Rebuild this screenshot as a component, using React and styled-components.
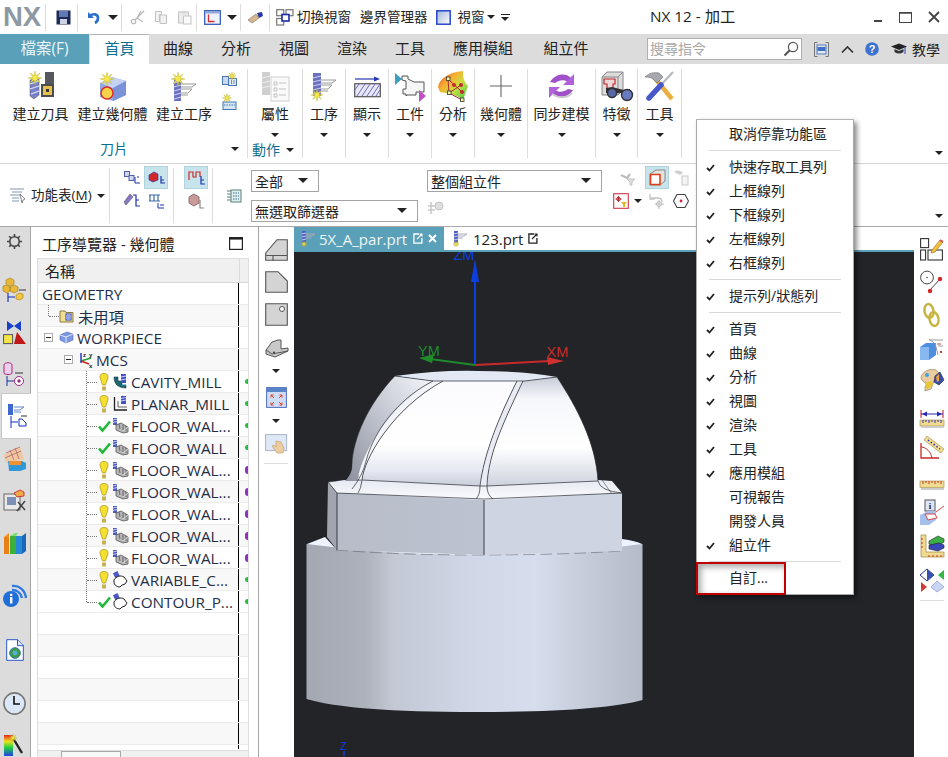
import React from "react";
import styled, { createGlobalStyle } from "styled-components";

const FONT = `"Open Sans", "Noto Sans CJK TC", sans-serif`;
const TEAL = "#5aa0b8";

const GlobalStyle = createGlobalStyle`
  html, body { margin: 0; padding: 0; background: #fff; }
  body { font-family: ${FONT}; color: #222; }
  * { box-sizing: border-box; }
`;

const Glyph = styled.svg`
  display: block;
  flex-shrink: 0;
  overflow: ${(p) => (p.$clip ? "hidden" : "visible")};
`;

const Ic = ({ w, h = w, children }) => (
  <Glyph width={w} height={h} viewBox={`0 0 ${w} ${h}`}>
    {children}
  </Glyph>
);

// yellow burst used on the "create" icons
const Spark = ({ x, y, r = 7 }) => {
  const pts = [];
  for (let i = 0; i < 16; i++) {
    const a = (i * Math.PI) / 8;
    const d = i % 2 ? r * 0.35 : r;
    pts.push(`${x + Math.cos(a) * d},${y + Math.sin(a) * d}`);
  }
  return <polygon points={pts.join(" ")} fill="#f4e84a" stroke="#b9a92a" strokeWidth=".4" />;
};

const Cutter = ({ x = 0, y = 0, w = 8, h = 24 }) => (
  <g>
    <rect x={x} y={y} width={w} height={h} fill="#6a72c0" />
    {[3, 7, 11, 15, 19].map((d) => (
      <path key={d} d={`M${x} ${y + d + 2}L${x + w} ${y + d}`} stroke="#c8ccec" strokeWidth="1.2" />
    ))}
  </g>
);

const OpLines = ({ x, y }) => (
  <g fill="none" stroke="#9a9a9a" strokeWidth="1">
    <path d={`M${x} ${y}H${x + 15}L${x + 11} ${y + 3}H${x}`} />
    <path d={`M${x} ${y + 5}H${x + 11}L${x + 7} ${y + 9}H${x}`} />
    <path d={`M${x} ${y + 11}H${x + 7}`} />
  </g>
);

const Icons = {
  save: () => (
    <Ic w={15}>
      <rect x=".5" y=".5" width="14" height="14" fill="#1d2a58" />
      <rect x="3" y="1" width="9" height="6" fill="#5f79b4" />
      <rect x="4" y="9" width="7" height="5" fill="#ccd4e4" />
    </Ic>
  ),
  undo: () => (
    <Ic w={16}>
      <path d="M3 3v6h6" fill="#2a6fd0" />
      <path d="M5 7c3-3 8-2 8 2 0 2-1 4-3 5" fill="none" stroke="#2a6fd0" strokeWidth="2.6" />
    </Ic>
  ),
  scissors: () => (
    <Ic w={15}>
      <path d="M14 1L5 10M11 1L7 8L13 12" stroke="#bdbdbd" strokeWidth="1.4" fill="none" />
      <circle cx="3.5" cy="11.5" r="2.2" fill="none" stroke="#bdbdbd" strokeWidth="1.3" />
    </Ic>
  ),
  copy: () => (
    <Ic w={14}>
      <path d="M1.5 1.5h6v3h-2v7h-4zM6 5h6.5v8.5H6z" fill="#f2f2f2" stroke="#c2c2c2" />
    </Ic>
  ),
  paste: () => (
    <Ic w={15}>
      <rect x="1.5" y="2" width="10" height="11" fill="#ececec" stroke="#c4c4c4" />
      <rect x="4" y="1" width="5" height="2.5" fill="#d4d4d4" />
      <rect x="6.5" y="6" width="7.5" height="8" fill="#fafafa" stroke="#c4c4c4" />
    </Ic>
  ),
  view: () => (
    <Ic w={17} h={15}>
      <rect x=".7" y=".7" width="15.6" height="13.6" fill="#eef2fa" stroke="#2a50b8" strokeWidth="1.2" />
      <rect x="1" y="1" width="15" height="2.5" fill="#90a8d8" />
      <path d="M4.5 4.5v7h6" fill="none" stroke="#d03030" strokeWidth="1.3" />
    </Ic>
  ),
  brush: () => (
    <Ic w={17} h={13}>
      <path d="M1 9l8-6 3 4-7 5z" fill="#d8b890" stroke="#7a6a50" strokeWidth=".6" />
      <path d="M10 2l5-1 1 4-4 2z" fill="#2838a8" />
    </Ic>
  ),
  switchWin: () => (
    <Ic w={18} h={17}>
      <g fill="#fff" stroke="#777" strokeWidth="1.2">
        <rect x=".7" y=".7" width="7" height="6" />
        <rect x="10" y=".7" width="7" height="6" />
        <rect x=".7" y="9.5" width="7" height="6.5" />
      </g>
      <rect x="6" y="5.5" width="7" height="6.5" fill="#fff" stroke="#1a2aa8" strokeWidth="1.6" />
    </Ic>
  ),
  winBlue: () => (
    <Ic w={15}>
      <defs>
        <linearGradient id="wb" x1="0" y1="0" x2="1" y2="1">
          <stop offset="0" stopColor="#9fb6d8" />
          <stop offset="1" stopColor="#ffffff" />
        </linearGradient>
      </defs>
      <rect x=".8" y=".8" width="13.4" height="13.4" fill="url(#wb)" stroke="#1a3ac8" strokeWidth="1.4" />
    </Ic>
  ),
  search: () => (
    <Ic w={16}>
      <circle cx="10" cy="6" r="4.6" fill="#fff" stroke="#555" strokeWidth="1.2" />
      <path d="M6.5 9.5L1.5 14.5" stroke="#555" strokeWidth="2.2" />
    </Ic>
  ),
  ribbonMin: () => (
    <Ic w={15}>
      <path d="M3.5.5H.5v14h3M11.5.5h3v14h-3" fill="none" stroke="#777" />
      <rect x="3" y="3" width="9" height="9" fill="#dfe6f4" stroke="#5878b8" />
      <rect x="3.5" y="5" width="8" height="4" fill="#3d70c0" />
    </Ic>
  ),
  chevUp: () => (
    <Ic w={13} h={9}>
      <path d="M1 7.5L6.5 2 12 7.5" fill="none" stroke="#333" strokeWidth="1.7" />
    </Ic>
  ),
  help: () => (
    <Ic w={14}>
      <circle cx="7" cy="7" r="6.8" fill="#3c72d0" />
      <text x="7" y="11" textAnchor="middle" fontSize="11" fontWeight="700" fill="#fff" fontFamily="Liberation Sans">?</text>
    </Ic>
  ),
  hat: () => (
    <Ic w={16} h={12}>
      <path d="M0 3.5L8 .5 16 3.5 8 7z" fill="#222" />
      <path d="M3.5 6v3c3 2 6 2 9 0V6L8 8z" fill="#333" />
      <path d="M14 4v7" stroke="#2840c0" />
    </Ic>
  ),
  toolCreate: () => (
    <Ic w={30}>
      <rect x="19" y="1" width="9" height="14" fill="#55585c" />
      <rect x="15" y="13" width="13" height="13" fill="#4a4c50" />
      <rect x="17" y="15" width="9" height="9" fill="#e8c050" />
      <rect x="20" y="18" width="3" height="3" fill="#333" />
      <path d="M4 9l9-2v17l-5 4-4-3z" fill="#7880c8" stroke="#555" strokeWidth=".5" />
      <path d="M4 13l9-3M4 18l9-3M5 23l8-3" stroke="#dfe2f4" strokeWidth="1.3" />
      <Spark x={9} y={7} r={7} />
    </Ic>
  ),
  geomCreate: () => (
    <Ic w={31}>
      <path d="M3 12l12-6 14 4v14l-13 6L3 26z" fill="#8ea8e6" />
      <path d="M3 12l13 5 13-7-14-4z" fill="#c6d2f2" />
      <path d="M16 17v13l13-6V10z" fill="#7c92d8" />
      <circle cx="10" cy="22" r="6" fill="#f4d24a" stroke="#e02828" strokeWidth="1.4" />
      <Spark x={10} y={8} r={7} />
    </Ic>
  ),
  opCreate: () => (
    <Ic w={28}>
      <g transform="translate(4 6)"><Cutter w={7} h={23} /></g>
      <OpLines x={11} y={12} />
      <Spark x={8} y={7} r={7} />
    </Ic>
  ),
  smallA: () => (
    <Ic w={15} h={14}>
      <rect x=".5" y="4.5" width="6" height="8" fill="#ccd8f0" stroke="#4878b8" />
      <rect x="6.5" y="6.5" width="8" height="7" fill="#dfe8f6" stroke="#4878b8" />
      <path d="M9 9h1M11.5 9h1M9 11h1M11.5 11h1" stroke="#333" />
      <Spark x={10} y={4} r={4} />
    </Ic>
  ),
  smallB: () => (
    <Ic w={15} h={17}>
      <rect x="1" y="9" width="13" height="7.5" fill="#d6e6f4" stroke="#3d78b0" />
      <path d="M2 12h11" stroke="#3d78b0" strokeDasharray="1.5 1" />
      <Spark x={5} y={5} r={4.5} />
    </Ic>
  ),
  props: () => (
    <Ic w={29} h={31}>
      <rect x="1" y="1" width="8" height="23" fill="#cfcfcf" />
      <path d="M1 7l8-2M1 12l8-2M1 17l8-2" stroke="#eee" />
      <rect x="10" y="6" width="18" height="24" fill="#fafafa" stroke="#d0d0d0" />
      <path d="M13 11h3v3h-3zM13 17h3v3h-3zM13 23h3v3h-3zM18 12h7M18 18h7M18 24h7" fill="none" stroke="#c2c2c2" />
    </Ic>
  ),
  ops: () => (
    <Ic w={28}>
      <g transform="translate(3 1)"><Cutter w={8} h={23} /></g>
      <OpLines x={11} y={8} />
      <Spark x={7} y={23} r={6} />
    </Ic>
  ),
  display: () => (
    <Ic w={27} h={21}>
      <path d="M1 3h21" stroke="#2838b0" strokeWidth="1.2" />
      <path d="M20 .5L26 3l-6 2.5z" fill="#2838b0" />
      <rect x=".7" y="7.7" width="25.6" height="13" fill="#e7e7f6" stroke="#555" strokeWidth="1.2" />
      <path d="M3 20l8-12M8 20l8-12M13 20l8-12M18 20l8-12M0 15l5-7M22 20l4-6" stroke="#6c6cc0" />
    </Ic>
  ),
  workpiece: () => (
    <Ic w={32} h={29}>
      <path d="M1 1l7 6-7 6z" fill="#3d9fc0" />
      <path d="M8 4h6v3l6 3h10v10h-8v3H13l-1 1v-2H9v-5h3V9L8 8z" fill="#f6f6f6" stroke="#555" strokeWidth="1" />
      <path d="M25 18l7 6-7 6z" fill="#c050c8" />
    </Ic>
  ),
  analysis: () => (
    <Ic w={32} h={31}>
      <defs>
        <linearGradient id="an" x1="0" y1="0" x2="1" y2="1">
          <stop offset="0" stopColor="#e8402c" />
          <stop offset=".35" stopColor="#f6b030" />
          <stop offset=".6" stopColor="#c8e040" />
          <stop offset="1" stopColor="#38c850" />
        </linearGradient>
      </defs>
      <path d="M1 16C2 8 12 1 26 0c0 7 1 11 5 15l-5 14C18 23 8 22 3 21z" fill="url(#an)" />
      <path d="M11 8l1 14 13 7 M11 8l14 13 M12 22l12-8" stroke="#a82838" fill="none" />
      <circle cx="24" cy="14" r="2" fill="#c82830" />
      <circle cx="17" cy="14" r="2" fill="#c82830" />
      <circle cx="25" cy="21" r="2" fill="#c82830" />
      <g fill="#f8f4a0" stroke="#333" strokeWidth=".8">
        <rect x="9.5" y="6" width="3.5" height="3.5" />
        <rect x="10.5" y="20" width="3.5" height="3.5" />
        <rect x="23.5" y="27" width="3.5" height="3.5" />
      </g>
    </Ic>
  ),
  cross: () => (
    <Ic w={24}>
      <path d="M12 1v22M1 12h22" stroke="#666" strokeWidth="1.1" />
    </Ic>
  ),
  sync: () => (
    <Ic w={29} h={26}>
      <path d="M3 9C8 1 18-1 24 5l-3 4c-4-3-9-2-13 1z" fill="#a050c8" />
      <path d="M27 1v11h-11z" fill="#b060d8" />
      <path d="M26 17c-5 8-15 10-21 4l3-4c4 3 9 2 13-1z" fill="#a050c8" />
      <path d="M2 25V14h11z" fill="#b060d8" />
      <path d="M5 21c6 4 14 5 20-1" fill="none" stroke="#ccc" strokeWidth="2" />
    </Ic>
  ),
  feature: () => (
    <Ic w={32} h={30}>
      <path d="M1 6l5-5h16v18l-5 5H1z" fill="#dcdcdc" stroke="#888" />
      <path d="M1 6h16v18M17 6l5-5" fill="none" stroke="#888" />
      <path d="M3 8h11v5h-2v8H6v-8H3z" fill="#efd8d8" stroke="#c02828" strokeWidth="1.2" />
      <path d="M5 17l6-1 12 3 6-1v4l-24 0z" fill="#333" />
      <circle cx="11" cy="22" r="4.5" fill="#5868a8" stroke="#333" strokeWidth="1.4" />
      <circle cx="26" cy="24" r="5.5" fill="#6a7ac0" stroke="#333" strokeWidth="1.4" />
    </Ic>
  ),
  tools: () => (
    <Ic w={30}>
      <path d="M9 6L27 28" stroke="#e8b040" strokeWidth="4.5" />
      <path d="M0 6c4-4 9-5 14-4l4 4-6 6-3-3C6 6 3 6 0 6z" fill="#a8a8b0" stroke="#666" strokeWidth=".6" />
      <path d="M28 1L15 15" stroke="#b8b8c0" strokeWidth="2.2" />
      <path d="M16 14L4 27" stroke="#4858c8" strokeWidth="5.5" strokeLinecap="round" />
    </Ic>
  ),
  menuFn: () => (
    <Ic w={17} h={15}>
      <path d="M1 1h14M3 4h10M1 7h11M3 10h7M3 13h7" stroke="#8098b4" strokeWidth="1.2" />
      <path d="M11 6l5 5-2 1-1 3z" fill="#fff" stroke="#666" strokeWidth=".8" />
    </Ic>
  ),
  orderA: () => (
    <Ic w={17} h={14}>
      <rect x=".5" y=".5" width="5" height="5" fill="#d0d8f0" stroke="#5060a8" />
      <rect x="5" y="4.5" width="5" height="5" fill="#d0d8f0" stroke="#5060a8" />
      <path d="M11 6v6h5M13 6h2" fill="none" stroke="#1a30b0" />
    </Ic>
  ),
  orderB: () => (
    <Ic w={17} h={14}>
      <path d="M1 4l5-3 4 2v6l-5 2-4-2z" fill="#d02828" stroke="#3040a8" strokeWidth=".7" />
      <path d="M13 5v7h4M13 9h3" fill="none" stroke="#1a30b0" strokeWidth="1.2" />
    </Ic>
  ),
  orderC: () => (
    <Ic w={18}>
      <path d="M1 10l6-8 3 3-7 8z" fill="#8878c8" stroke="#555" strokeWidth=".6" />
      <path d="M10 3h3v11h4M13 8h3" fill="none" stroke="#1a30b0" strokeWidth="1.2" />
    </Ic>
  ),
  orderD: () => (
    <Ic w={17} h={15}>
      <path d="M1 2h11M1 8h11M2 2v6M6 2v6M10 2v6" stroke="#3c68a8" strokeWidth="1.2" />
      <path d="M10 10v5h6M12 12h4" fill="none" stroke="#1a30b0" />
    </Ic>
  ),
  orderE: () => (
    <Ic w={17} h={15}>
      <path d="M1 10V2h4v5h3V2h4v5" fill="none" stroke="#d02828" strokeWidth="1.2" />
      <path d="M13 6v8h4M13 10h3" fill="none" stroke="#1a30b0" strokeWidth="1.2" />
    </Ic>
  ),
  orderF: () => (
    <Ic w={17} h={16}>
      <path d="M1 4l5-3 5 3v6l-5 3-5-3z" fill="#c89a9a" stroke="#907070" />
      <path d="M12 7v8h4" fill="none" stroke="#888" strokeWidth="1.2" />
    </Ic>
  ),
  drum: () => (
    <Ic w={16}>
      <path d="M1 3h10M1 6h10M1 9h10M1 12h10" stroke="#5c7e7e" />
      <rect x="5" y="2" width="10" height="12" fill="#e0eef0" stroke="#5c7e7e" />
      <path d="M7 5h6M7 8h6M7 11h6" stroke="#3a6a8a" strokeDasharray="1.5 1" />
    </Ic>
  ),
  grayNodes: () => (
    <Ic w={17} h={15}>
      <path d="M4 2v12M1 6h9M1 10h7" stroke="#c8c8c8" strokeWidth="1.5" />
      <circle cx="12" cy="6" r="4" fill="#dedede" stroke="#c4c4c4" />
    </Ic>
  ),
  grayFilter: () => (
    <Ic w={17} h={15}>
      <path d="M2 5l6 3 3-4" fill="none" stroke="#bcbcbc" strokeWidth="2.2" />
      <path d="M8 9h8l-3 3v3h-2v-3z" fill="#dedede" stroke="#c4c4c4" />
    </Ic>
  ),
  box3d: () => (
    <Ic w={17}>
      <path d="M1 5l6-4h9v11l-5 4H1z" fill="#e2e2e2" stroke="#888" />
      <path d="M1.5 5.5h9.5v10H1.5z" fill="#fff" stroke="#e04018" strokeWidth="1.6" />
    </Ic>
  ),
  grayCloud: () => (
    <Ic w={16} h={17}>
      <path d="M1 3c3-2 6-2 9 1l-3 2z" fill="#cfcfcf" />
      <rect x="9" y="7" width="6" height="9" fill="#f4f4f4" stroke="#c8c8c8" />
    </Ic>
  ),
  snapFilter: () => (
    <Ic w={16}>
      <rect x=".7" y=".7" width="14.6" height="14.6" fill="#fff" stroke="#d03848" strokeWidth="1.1" />
      <path d="M5.5 3v6M2.5 6h6" stroke="#b02830" />
      <circle cx="5.5" cy="6" r="1.8" fill="none" stroke="#b02830" />
      <path d="M8 9h6l-2 2.5V14h-2v-2.5z" fill="#e8b820" />
    </Ic>
  ),
  grayUndo: () => (
    <Ic w={18} h={16}>
      <path d="M2 5h8c3 0 4 2 4 4" fill="none" stroke="#c4c4c4" strokeWidth="1.4" />
      <path d="M2 1v5h5" fill="none" stroke="#c4c4c4" strokeWidth="1.3" />
      <circle cx="11" cy="11" r="2.5" fill="none" stroke="#bbb" />
      <path d="M11 7v9M7 11h9" stroke="#bbb" />
    </Ic>
  ),
  hexDot: () => (
    <Ic w={16}>
      <path d="M4 1.5h8L15.5 8 12 14.5H4L.5 8z" fill="#fff" stroke="#444" strokeWidth="1.1" />
      <circle cx="8" cy="8" r="1.4" fill="#d02838" />
    </Ic>
  ),
  gear: () => (
    <Ic w={15}>
      <circle cx="7.5" cy="7.5" r="4.7" fill="none" stroke="#444" strokeWidth="1.6" />
      <path d="M7.5 0v2.6M7.5 12.4V15M0 7.5h2.6M12.4 7.5H15M2.2 2.2l1.8 1.8M11 11l1.8 1.8M2.2 12.8L4 11M11 4l1.8-1.8" stroke="#444" strokeWidth="1.6" />
    </Ic>
  ),
  railGeom: () => (
    <Ic w={23} h={26}>
      <path d="M3 3l4-2 4 2v4l-4 2-4-2zM0 9l3-1 4 2v4l-3 2-4-2zM7 10l4-2 4 2v4l-4 2-4-2z" fill="#e8b838" stroke="#a87818" strokeWidth=".6" />
      <path d="M16 13h7" stroke="#333" />
      <path d="M5 16v9M5 20h7" stroke="#1030c0" strokeWidth="1.1" />
      <path d="M13 18l3-2 4 1v4l-3 2-4-1z" fill="#f0c840" stroke="#a87818" strokeWidth=".6" />
    </Ic>
  ),
  railMachine: () => (
    <Ic w={23}>
      <path d="M4 0l7 5 7-5v10l-7-5-7 5z" fill="#1840c8" />
      <rect x=".6" y="13.6" width="9" height="9" fill="#f4e44a" stroke="#555" />
      <path d="M11 23h12L14 11z" fill="#c01818" />
    </Ic>
  ),
  railProgram: () => (
    <Ic w={23} h={25}>
      <path d="M1 3c0-3 8-3 8 0v8c0 2-8 2-8 0z" fill="#f0d0e8" stroke="#a02880" />
      <path d="M12 11h8" stroke="#333" />
      <path d="M4 14v10M4 19h7" stroke="#1a30a0" />
      <circle cx="16" cy="19" r="4.5" fill="#fff" stroke="#a02880" />
      <circle cx="16" cy="19" r="1.7" fill="#a02880" />
    </Ic>
  ),
  railOrder: () => (
    <Ic w={20} h={24}>
      <rect x="1" y="0" width="5" height="11" fill="#3c68d0" />
      <path d="M7 3h10l-4 3H7M7 8h7" fill="none" stroke="#6088d0" />
      <path d="M14 12h6" stroke="#333" />
      <path d="M4 12v12M4 18h7" stroke="#1030c0" />
      <path d="M12 15h3l4 4v3h-7z" fill="#fff" stroke="#1030c0" />
    </Ic>
  ),
  railReuse: () => (
    <Ic w={24}>
      <path d="M1 8l16-8 4 12-18 4z" fill="#f0c8a0" />
      <path d="M3 6l14-6M2 11l16-7M7 3l4 10M12 1l4 11" stroke="#c07878" />
      <path d="M5 14h14l4 2v6l-6 2H6z" fill="#3098d8" />
      <rect x="6" y="14" width="12" height="4" fill="#f09030" />
    </Ic>
  ),
  railTools: () => (
    <Ic w={23}>
      <rect x="1" y="5" width="16" height="16" fill="#e8e8e8" stroke="#666" />
      <rect x="4" y="8" width="9" height="8" fill="#7c90b8" />
      <path d="M14 22l8-10M15 13l7 8" stroke="#444" strokeWidth="1.5" />
      <path d="M11 4l6-3 4 2v4l-7 1z" fill="#f0a848" stroke="#c02020" strokeWidth=".8" />
    </Ic>
  ),
  railBooks: () => (
    <Ic w={23} h={22}>
      <path d="M1 5l5-4v17l-5 3z" fill="#f09028" />
      <rect x="1" y="5" width="5" height="17" fill="#e88018" />
      <rect x="7" y="4" width="6" height="18" fill="#3cb038" />
      <path d="M7 4l5-3h3l-2 3z" fill="#7ce070" />
      <rect x="13" y="4" width="6" height="18" fill="#2888d8" />
      <path d="M19 22l4-3V1l-4 3z" fill="#1868b8" />
    </Ic>
  ),
  railInfo: () => (
    <Ic w={24}>
      <path d="M9 2c7-1 13 4 14 12M9 6c5 0 9 3 10 8" fill="none" stroke="#2f7ae0" strokeWidth="2.4" />
      <circle cx="8" cy="15" r="8" fill="#1f6fd8" />
      <rect x="7" y="13" width="2.4" height="6.5" fill="#fff" />
      <rect x="7" y="9.8" width="2.4" height="2.2" fill="#fff" />
    </Ic>
  ),
  railWeb: () => (
    <Ic w={18} h={22}>
      <path d="M.7.7h11l5.6 5.6v15H.7z" fill="#fff" stroke="#2858c8" />
      <path d="M11.5.7v6h6" fill="#dfe8f8" stroke="#2858c8" />
      <circle cx="9" cy="14" r="5.3" fill="#3ca040" stroke="#3070b0" />
      <circle cx="9" cy="14" r="2.4" fill="#5ea8e0" />
    </Ic>
  ),
  railClock: () => (
    <Ic w={23}>
      <circle cx="11.5" cy="11.5" r="10.6" fill="#dbe6f6" stroke="#777" strokeWidth="1.6" />
      <path d="M11 4v8h6" fill="none" stroke="#111" strokeWidth="1.6" />
    </Ic>
  ),
  railColor: () => (
    <Ic w={24} h={21}>
      <defs>
        <linearGradient id="rb" x1="0" y1="0" x2="0" y2="1">
          <stop offset="0" stopColor="#e82020" />
          <stop offset=".3" stopColor="#f0e020" />
          <stop offset=".6" stopColor="#20d040" />
          <stop offset="1" stopColor="#2040e8" />
        </linearGradient>
      </defs>
      <rect x="1" y="0" width="9" height="21" fill="url(#rb)" />
      <path d="M10 3l9 15" stroke="#222" strokeWidth="2.4" />
      <Spark x={10} y={3} r={4} />
    </Ic>
  ),
  bulb: () => (
    <Ic w={10} h={18}>
      <path d="M5 .5c3 0 4.3 1.5 4 4L6.5 12h-3L1 4.5C.7 2 2 .5 5 .5z" fill="#f4e030" stroke="#a89010" strokeWidth=".7" />
      <rect x="3" y="13.5" width="4" height="4" fill="#c8b050" />
    </Ic>
  ),
  check: () => (
    <Ic w={13} h={12}>
      <path d="M1 6.5l3.5 4L12 1.5" fill="none" stroke="#20b838" strokeWidth="2.6" />
    </Ic>
  ),
  folder: () => (
    <Ic w={15} h={14}>
      <path d="M1 2h5l1 1.5h7V13H1z" fill="#f4dc90" stroke="#8a7a40" />
      <rect x="7" y="5" width="5" height="6" fill="#fff" stroke="#2040c0" />
      <path d="M8 7h3M8 9h3" stroke="#2040c0" />
    </Ic>
  ),
  workBox: () => (
    <Ic w={15} h={13}>
      <path d="M1 4l7-3 6 2v6l-7 3-6-3z" fill="#7c98e0" stroke="#5068b8" strokeWidth=".6" />
      <path d="M1 4l6 2 7-3" fill="none" stroke="#dfe8fa" />
      <path d="M7 6v6" stroke="#dfe8fa" />
    </Ic>
  ),
  mcs: () => (
    <Ic w={17} h={17}>
      <path d="M4 2v10" stroke="#1830c0" strokeWidth="1.4" />
      <path d="M4 10l10-3" stroke="#20a030" strokeWidth="1.4" />
      <path d="M4 10l8 3" stroke="#d02020" strokeWidth="1.4" />
      <text x="6" y="6" fontSize="6" fontWeight="700" fontFamily="Liberation Sans" fill="#222">z</text>
      <text x="12" y="6" fontSize="6" fontWeight="700" fontFamily="Liberation Sans" fill="#222">y</text>
      <text x="12" y="17" fontSize="6" fontWeight="700" fontFamily="Liberation Sans" fill="#222">x</text>
    </Ic>
  ),
  cavity: () => (
    <Ic w={15}>
      <path d="M1 3c0 7 4 11 12 11v-3H9V7H5V3z" fill="#1a6a70" stroke="#123" strokeWidth=".5" />
      <rect x="8" y="0" width="5" height="9" fill="#4050c8" />
      <path d="M8 3l5-1M8 6l5-1" stroke="#c8ccec" />
      <path d="M9 11h5" stroke="#20c8e0" strokeDasharray="1.5 1" />
    </Ic>
  ),
  planar: () => (
    <Ic w={15}>
      <path d="M1.5 1v13H14" fill="none" stroke="#222" strokeWidth="1.3" />
      <path d="M5 5v6h9" fill="none" stroke="#666" />
      <rect x="8" y="0" width="5" height="8" fill="#4050c8" />
      <path d="M8 2.5l5-1M8 5l5-1" stroke="#c8ccec" />
    </Ic>
  ),
  floorOp: () => (
    <Ic w={15}>
      <rect x="0" y="0" width="4" height="7" fill="#4a58c8" />
      <path d="M0 2l4-1M0 4.5l4-1" stroke="#c8ccec" />
      <path d="M3 7l5-2 7 4v5l-5 1-7-3z" fill="#b4b4b4" stroke="#555" strokeWidth=".8" />
      <path d="M6 6l1 5 3 2M10 7l0 6M13 8v5" fill="none" stroke="#555" strokeWidth=".8" />
      <path d="M7 11l3 2 5-4" fill="none" stroke="#eee" strokeWidth=".8" />
    </Ic>
  ),
  contour: () => (
    <Ic w={15}>
      <rect x="1" y="0" width="5" height="6" fill="#4a58c8" transform="rotate(-25 3 3)" />
      <path d="M1 8c2-4 7-5 10-3l3 4-2 3-3 1-2 2c-3 0-6-2-6-5z" fill="#fff" stroke="#222" />
    </Ic>
  ),
  navMax: () => (
    <Ic w={14} h={13}>
      <rect x=".6" y=".6" width="12.8" height="11.8" fill="#fff" stroke="#222" strokeWidth="1.2" />
      <rect x="1" y="1" width="12" height="1.6" fill="#222" />
    </Ic>
  ),
  tabOp: () => (
    <Ic w={16}>
      <rect x="2" y="0" width="4" height="12" fill="#5060c8" />
      <path d="M2 3l4-1M2 6l4-1M2 9l4-1" stroke="#c8ccec" />
      <path d="M6 3h9l-3 2H6M6 7h5" fill="none" stroke="#aab" />
      <Spark x={4} y={13} r={3} />
    </Ic>
  ),
  docRef: ({ light }) => (
    <Ic w={10} h={11}>
      <path d="M6 1H.9v9.1h8V5" fill="none" stroke={light ? "#fff" : "#222"} strokeWidth="1.3" />
      <path d="M4 6l5-5M6.5 1H9v2.5" fill="none" stroke={light ? "#fff" : "#222"} strokeWidth="1.1" />
    </Ic>
  ),
  closeX: () => (
    <Ic w={9}>
      <path d="M1 1l7 7M8 1l-7 7" stroke="#fff" strokeWidth="2" />
    </Ic>
  ),
  sideA: () => (
    <Ic w={23} h={22}>
      <path d="M.7 14L12 .7h10.3V21.3H.7z" fill="#d4d4d4" stroke="#555" strokeWidth="1.1" />
      <path d="M1 16.5h21M8 16.5v5" stroke="#555" strokeWidth="1.1" />
    </Ic>
  ),
  sideB: () => (
    <Ic w={23} h={22}>
      <path d="M.7.7H13L22.3 10V21.3H.7z" fill="#d4d4d4" stroke="#555" strokeWidth="1.1" />
    </Ic>
  ),
  sideC: () => (
    <Ic w={23}>
      <path d="M.7.7H22.3V22.3H.7z" fill="#d4d4d4" stroke="#555" strokeWidth="1.1" />
      <circle cx="17" cy="6" r="2.5" fill="#fff" stroke="#555" />
    </Ic>
  ),
  sideD: () => (
    <Ic w={23} h={19}>
      <path d="M1 11L7 3l6-2h3v9l7-1v3L10 18 1 15z" fill="#c8c8c8" stroke="#555" />
      <path d="M1 11l6 4 16-3" fill="none" stroke="#555" />
      <circle cx="9" cy="13.5" r="1" fill="#333" />
    </Ic>
  ),
  sideE: () => (
    <Ic w={21}>
      <rect x=".6" y=".6" width="19.8" height="19.8" fill="#cfdcf4" stroke="#5070c0" />
      <rect x="1" y="1" width="19" height="4" fill="#5884c8" />
      <path d="M5 8l3 3M5 8v2.5M5 8h2.5M16 8l-3 3M16 8v2.5M16 8h-2.5M5 18l3-3M5 18v-2.5M5 18h2.5M16 18l-3-3M16 18v-2.5M16 18h-2.5" stroke="#e04028" fill="none" />
    </Ic>
  ),
  sideF: () => (
    <Ic w={23} h={20}>
      <rect x=".6" y=".6" width="21" height="16" fill="#dfe8f6" stroke="#aab4c8" />
      <path d="M12 19l-5-7 2-1 2 2 0-6 5 1 3 6-1 5z" fill="#eccda0" stroke="#b89870" strokeWidth=".6" />
    </Ic>
  ),
  rightA: () => (
    <Ic w={23}>
      <g fill="#fff" stroke="#333" strokeWidth="1.1">
        <rect x=".6" y=".6" width="8" height="9" />
        <rect x=".6" y="12" width="5" height="10" />
        <rect x="8" y="12" width="14.4" height="10" />
      </g>
      <path d="M12 12l8-10 3 2-8 10-4 1z" fill="#f0c040" stroke="#b07820" strokeWidth=".7" />
      <path d="M20 2l3 2" stroke="#d85050" strokeWidth="2" />
    </Ic>
  ),
  rightB: () => (
    <Ic w={23} h={24}>
      <circle cx="7" cy="7.5" r="6.4" fill="#fff" stroke="#444" />
      <circle cx="7" cy="7.5" r=".8" fill="#444" />
      <path d="M10 20L20 9" stroke="#444" />
      <circle cx="10" cy="21" r="2.2" fill="#d02828" />
      <circle cx="20" cy="9" r="2.2" fill="#d02828" />
    </Ic>
  ),
  rightC: () => (
    <Ic w={19} h={24}>
      <ellipse cx="7" cy="8" rx="4.5" ry="7" fill="none" stroke="#c8b440" strokeWidth="2.4" transform="rotate(-10 7 8)" />
      <ellipse cx="12" cy="16" rx="4.5" ry="7" fill="none" stroke="#c8b440" strokeWidth="2.4" transform="rotate(-10 12 16)" />
    </Ic>
  ),
  rightD: () => (
    <Ic w={24} h={22}>
      <path d="M0 9l6-4h10v12l-7 5H0z" fill="#4d8ee0" />
      <rect x="0" y="9" width="9" height="13" fill="#88b8f0" />
      <path d="M9 2h14M15 5l3 12M9 1l5 4M23 8h-5" stroke="#999" />
      <path d="M17 6h4M20 13l2 2M22 13l-2 2" stroke="#c04848" />
    </Ic>
  ),
  rightE: () => (
    <Ic w={24}>
      <path d="M1 9c2-6 9-9 15-7l5 5-7 6-3 8-6 2v-4l2-4c-3 0-6-3-6-6z" fill="#e8cca0" stroke="#9a8460" strokeWidth=".7" />
      <path d="M5 15l6-2 2 3-6 6z" fill="#e8c830" />
      <circle cx="7" cy="7" r="2" fill="#40a0e0" />
      <path d="M15 8l5-4 4 8-5 5-5-3z" fill="#3850a8" stroke="#223" strokeWidth=".6" />
      <path d="M16 9l3-3v7l-2 1z" fill="#f0a040" />
    </Ic>
  ),
  rightF: () => (
    <Ic w={24} h={18}>
      <path d="M1 0v8M23 0v8" stroke="#d02828" strokeWidth="1.1" />
      <path d="M1 4h22" stroke="#2828b8" />
      <path d="M2 4l5-2.5v5zM22 4l-5-2.5v5z" fill="#2828b8" />
      <rect x="0" y="10" width="24" height="6" fill="#f0dc90" stroke="#a08840" strokeWidth=".6" />
      <path d="M3 10v3M6 10v2M9 10v3M12 10v2M15 10v3M18 10v2M21 10v3" stroke="#3030b0" />
      <rect x="1" y="16" width="23" height="2" fill="#ccc" />
    </Ic>
  ),
  rightG: () => (
    <Ic w={24}>
      <path d="M1 8V23h18" fill="none" stroke="#c82828" strokeWidth="1.3" />
      <path d="M1 12c5 0 10 5 11 11" fill="none" stroke="#c82828" />
      <path d="M7 1l17 13-3 4L4 5z" fill="#f0dc90" stroke="#a08840" strokeWidth=".6" />
      <path d="M8 5l12 9" stroke="#3030b0" strokeDasharray="1.5 2" strokeWidth="1.5" />
    </Ic>
  ),
  rightH: () => (
    <Ic w={24} h={10}>
      <rect x="0" y="1" width="24" height="6.5" fill="#f0dc90" stroke="#a08840" strokeWidth=".6" />
      <path d="M3 1v3M6 1v2M9 1v3M12 1v2M15 1v3M18 1v2M21 1v3" stroke="#c83030" />
      <rect x="1" y="8" width="23" height="2" fill="#ccc" />
    </Ic>
  ),
  rightI: () => (
    <Ic w={24} h={25}>
      <rect x="5" y="0" width="10" height="11" fill="#dfe6f6" stroke="#555" />
      <text x="10" y="9" textAnchor="middle" fontSize="9" fontWeight="700" fontFamily="Liberation Serif" fill="#222">i</text>
      <path d="M0 15l8-4h8v9l-7 5H0z" fill="#a6c0ec" />
      <path d="M5 14h10l2 4-9 2z" fill="#fff" stroke="#d04848" />
      <path d="M16 12l8-6" stroke="#d04848" />
    </Ic>
  ),
  rightJ: () => (
    <Ic w={24} h={23}>
      <path d="M1 0h5v17h18v5H1z" fill="#f0dc90" stroke="#a08840" strokeWidth=".7" />
      <path d="M1 4h2M1 8h2M1 12h2M9 20v2M13 20v2M17 20v2M21 20v2" stroke="#c83030" />
      <path d="M9 6l9-5 6 3v3l-6 4-9-2z" fill="#3cae48" stroke="#222" strokeWidth=".6" />
      <path d="M9 10l10-2 5 2v3l-6 3-9-2z" fill="#3848b8" stroke="#222" strokeWidth=".6" />
    </Ic>
  ),
  rightK: () => (
    <Ic w={24}>
      <path d="M7 1l7 6-7 6-7-6z" fill="#fff" stroke="#2a3a90" />
      <path d="M7 1l7 6-7 6z" fill="#3a50b0" />
      <path d="M24 2v10l-6-5z" fill="#34b848" />
      <path d="M1 14v10l6-5z" fill="#d03c30" />
      <path d="M17 13l7 6-7 5-6-5z" fill="#c8d4f4" stroke="#a0b0e0" />
    </Ic>
  ),
};

const Root = styled.div`
  position: relative;
  width: 948px;
  height: 757px;
  overflow: hidden;
  background: #fff;
  display: flex;
  flex-direction: column;
  font-size: 14px;
`;

/* title bar */
const TitleBar = styled.div`
  height: 34px;
  display: flex;
  align-items: center;
  background: #fff;
`;
const Logo = styled.div`
  width: 45px;
  padding-left: 3px;
  font: 700 27.5px/1 "Liberation Sans", sans-serif;
  color: #8d99a3;
`;
const QuickCell = styled.div`
  display: flex;
  align-items: center;
  height: 27px;
  border-left: 1px solid #dcdcdc;
  width: ${(p) => p.$w}px;
  padding-left: ${(p) => p.$pad}px;
  gap: ${(p) => p.$gap || 0}px;
`;
const QuickText = styled.span`
  font-size: 13.5px;
  white-space: nowrap;
  padding-bottom: 3px;
  margin-left: ${(p) => p.$ml || 0}px;
`;
const Caret = styled.span`
  display: block;
  flex-shrink: 0;
  width: 0;
  height: 0;
  border-left: ${(p) => p.$s || 5}px solid transparent;
  border-right: ${(p) => p.$s || 5}px solid transparent;
  border-top: ${(p) => p.$s || 5}px solid #222;
`;
const QuickGap = styled.span`
  flex-shrink: 0;
  width: ${(p) => p.$w}px;
`;
const MenuGrip = styled.span`
  display: block;
  flex-shrink: 0;
  width: 9px;
  border-top: 1px solid #222;
  padding-top: 2px;
  margin-left: 6px;
  &::after {
    content: "";
    display: block;
    width: 0;
    margin: auto;
    border-left: 4.5px solid transparent;
    border-right: 4.5px solid transparent;
    border-top: 4px solid #222;
  }
`;
const AppTitle = styled.div`
  width: 90px;
  margin-left: 151px;
  white-space: nowrap;
  font-size: 15.3px;
  padding-bottom: 4px;
`;
const WinControls = styled.div`
  margin-left: auto;
  width: 74px;
  padding-right: 8px;
  display: flex;
  align-items: center;
  justify-content: space-between;
`;

/* tabs row */
const TabBar = styled.div`
  height: 30px;
  display: flex;
  align-items: stretch;
  background: #dcdcdc;
`;
const FileTab = styled.div`
  width: 89px;
  background: ${TEAL};
  color: #e8f4f8;
  font-size: 15.5px;
  padding-bottom: 4px;
  display: flex;
  align-items: center;
  justify-content: center;
`;
const RibbonTab = styled.div`
  width: ${(p) => p.$w}px;
  display: flex;
  align-items: center;
  justify-content: center;
  font-size: 15px;
  padding-bottom: 4px;
  color: ${(p) => (p.$active ? "#0d6f94" : "#222")};
  background: ${(p) => (p.$active ? "#fff" : "transparent")};
  border-top: ${(p) => (p.$active ? "1px solid #b4b4b4" : "none")};
  margin-left: ${(p) => p.$ml || 0}px;
`;
const SearchBox = styled.div`
  width: 155px;
  height: 22px;
  margin: 4px 0 0 auto;
  background: #fff;
  border: 1px solid #b0b0b0;
  display: flex;
  align-items: center;
  justify-content: space-between;
  padding: 0 2px 0 2px;
  color: #a8a8a8;
  font-size: 14px;
  line-height: 18px;
`;
const TabRight = styled.div`
  width: 146px;
  padding: 0 8px 0 12px;
  display: flex;
  align-items: center;
  justify-content: space-between;
  font-size: 14px;
`;
const HatLabel = styled.span`
  display: flex;
  align-items: center;
  gap: 5px;
`;

/* ribbon */
const Ribbon = styled.div`
  position: relative;
  height: 100px;
  display: flex;
  border-bottom: 1px solid #d4d4d4;
`;
const Group = styled.div`
  width: ${(p) => p.$w}px;
  height: 89px;
  margin-top: 5px;
  border-right: 1px solid #dcdcdc;
  display: flex;
  flex-direction: column;
`;
const GroupBody = styled.div`
  flex: 1;
  display: flex;
  padding-left: ${(p) => p.$pad || 0}px;
`;
const GroupFoot = styled.div`
  height: 22px;
  display: flex;
  align-items: center;
  padding: 3px 8px 0 ${(p) => p.$pad}px;
  color: #0d6f94;
  font-size: 14px;
  justify-content: space-between;
`;
const FootLabel = styled.span`
  padding-bottom: 2px;
`;
const RibbonItem = styled.div`
  width: ${(p) => p.$w}px;
  display: flex;
  flex-direction: column;
  align-items: center;
  font-size: 14px;
  white-space: nowrap;
`;
const ItemIcon = styled.div`
  height: 34px;
  display: flex;
  align-items: center;
  justify-content: center;
`;
const ItemLabel = styled.div`
  height: 22px;
  line-height: 22px;
`;
const ItemCaret = styled.div`
  margin-top: 8px;
`;
const SmallStack = styled.div`
  width: 22px;
  padding-top: 3px;
  display: flex;
  flex-direction: column;
  align-items: center;
  gap: 7px;
`;
const RibbonMore = styled.div`
  position: absolute;
  right: 5px;
  bottom: 8px;
`;

/* second toolbar */
const SelBar = styled.div`
  position: relative;
  height: 63px;
  display: flex;
  align-items: stretch;
  border-bottom: 1px solid #a8a8a8;
`;
const SelSection = styled.div`
  width: ${(p) => p.$w}px;
  margin: 4px 0 3px;
  border-right: ${(p) => (p.$plain ? "none" : "1px solid #dcdcdc")};
  display: flex;
  align-items: center;
  gap: ${(p) => p.$gap || 0}px;
  padding-left: ${(p) => p.$pad || 0}px;
`;
const IconGrid = styled.div`
  display: grid;
  align-self: flex-start;
  margin-top: -2px;
  grid-template-columns: ${(p) => p.$tpl};
  grid-auto-rows: 23px;
`;
const ToolBtn = styled.div`
  height: 23px;
  display: flex;
  align-items: center;
  justify-content: center;
  gap: 5px;
  background: ${(p) => (p.$on ? "#c7e4ec" : "transparent")};
  border: ${(p) => (p.$on ? "1px solid #b0d4de" : "none")};
`;
const ComboStack = styled.div`
  display: flex;
  flex-direction: column;
  align-self: flex-start;
  margin-top: 2px;
  gap: 8px;
`;
const Combo = styled.div`
  width: ${(p) => p.$w}px;
  height: 22px;
  border: 1px solid #a4a4a4;
  background: #fff;
  display: flex;
  align-items: center;
  justify-content: space-between;
  padding: 0 10px 1px 3px;
  font-size: 14px;
`;
const GrayNode = styled.div`
  width: 18px;
`;
const MenuLabel = styled.span`
  margin-left: 5px;
  margin-right: 5px;
  font-size: 13.5px;
  padding-bottom: 3px;
  white-space: nowrap;
  u {
    text-underline-offset: 2px;
  }
`;

/* main area */
const Main = styled.div`
  flex: 1;
  min-height: 0;
  display: flex;
`;
const Rail = styled.div`
  width: 31px;
  background: #dcdcdc;
  border-right: 1px solid #a4a4a4;
  display: flex;
  flex-direction: column;
  align-items: stretch;
`;
const RailSlot = styled.div`
  height: ${(p) => p.$h}px;
  margin-top: ${(p) => p.$top}px;
  display: flex;
  justify-content: center;
  align-items: center;
  flex-shrink: 0;
  padding-right: 1px;
`;
const RailActive = styled(RailSlot)`
  position: relative;
  z-index: 1;
  margin-left: 1px;
  margin-right: -1px;
  background: #fff;
  border: 1px solid #c8c8c8;
  border-right: none;
  padding-right: 0;
`;
const Navigator = styled.div`
  width: 228px;
  border-right: 1px solid #a4a4a4;
  display: flex;
  flex-direction: column;
  padding: 0 9px 0 6px;
`;
const NavHead = styled.div`
  height: 31px;
  flex-shrink: 0;
  display: flex;
  align-items: center;
  justify-content: space-between;
  padding: 2px 6px 0 5px;
  font-size: 15px;
`;
const TreeTable = styled.div`
  flex: 1;
  min-height: 0;
  border: 1px solid #dedede;
  border-bottom: none;
  display: flex;
  flex-direction: column;
`;
const TreeHeader = styled.div`
  height: 24px;
  flex-shrink: 0;
  background: #f0f0f0;
  border-bottom: 1px solid #d8d8d8;
  display: flex;
  align-items: center;
  justify-content: space-between;
  padding: 0 0 0 7px;
  font-size: 15px;
`;
const HeaderGrip = styled.span`
  width: 9px;
  height: 100%;
  border-left: 1px solid #dcdcdc;
`;
const TreeBody = styled.div`
  flex: 1;
  min-height: 0;
  overflow: hidden;
`;
const TreeRow = styled.div`
  height: 22px;
  display: flex;
  align-items: stretch;
  background: ${(p) => (p.$odd ? "#f8f8f8" : "#fff")};
  border-bottom: 1px solid #ebebeb;
`;
const TreeCell = styled.div`
  flex: 1;
  min-width: 0;
  display: flex;
  align-items: center;
  padding-left: ${(p) => p.$indent}px;
  font-size: 15.3px;
  color: #1f2f48;
  white-space: nowrap;
  overflow: hidden;
`;
const TailCell = styled.div`
  width: 10px;
  flex-shrink: 0;
  border-left: 1px solid #000;
  display: flex;
  align-items: center;
  justify-content: flex-end;
`;
const TailMark = styled.span`
  display: block;
  width: 3px;
  height: ${(p) => (p.$c === "p" ? 8 : 5)}px;
  background: ${(p) => (p.$c === "p" ? "#9030c0" : "#20c040")};
  border-radius: 3px 0 0 3px;
`;
const TreeEnd = styled.div`
  height: 4px;
  margin-left: auto;
  width: 10px;
  border-left: 1px solid #000;
`;
const Stem = styled.span`
  position: relative;
  width: 11px;
  height: ${(p) => (p.$last ? "50%" : "100%")};
  align-self: flex-start;
  flex-shrink: 0;
  border-left: 1px dotted #777;
  &::after {
    content: "";
    position: absolute;
    left: 0;
    right: 0;
    top: ${(p) => (p.$last ? "100%" : "50%")};
    border-top: 1px dotted #777;
  }
`;
const Expander = styled.span`
  display: flex;
  align-items: center;
  justify-content: center;
  width: 9px;
  height: 9px;
  border: 1px solid #aaa;
  background: #fff;
  flex-shrink: 0;
  margin-right: ${(p) => p.$mr}px;
  &::after {
    content: "";
    width: 5px;
    border-top: 1px solid #222;
  }
`;
const StatusCell = styled.span`
  width: 14px;
  margin-right: 2px;
  display: flex;
  justify-content: center;
  flex-shrink: 0;
`;
const RowLabel = styled.span`
  margin-left: ${(p) => p.$ml}px;
`;
const TreeScroll = styled.div`
  height: 7px;
  flex-shrink: 0;
  background: #f0f0f0;
  border-top: 1px solid #dedede;
  padding-left: 23px;
`;
const ScrollThumb = styled.div`
  width: 60px;
  height: 6px;
  background: #f8f8f8;
  border: 1px solid #a8a8a8;
  border-bottom: none;
`;
const SideBar = styled.div`
  width: 35px;
  display: flex;
  flex-direction: column;
  align-items: center;
  padding-right: 1px;
`;
const SideSlot = styled.div`
  margin-top: ${(p) => p.$top}px;
`;
const SideRule = styled.div`
  width: 24px;
  margin-top: ${(p) => p.$top}px;
  border-top: 1px solid #dcdcdc;
`;
const ViewColumn = styled.div`
  width: 620px;
  display: flex;
  flex-direction: column;
`;
const DocTabs = styled.div`
  height: 25px;
  flex-shrink: 0;
  display: flex;
  align-items: stretch;
  border-bottom: 2px solid ${TEAL};
  background: #fff;
`;
const DocTab = styled.div`
  width: ${(p) => p.$w}px;
  display: flex;
  align-items: center;
  padding-left: ${(p) => p.$pad}px;
  gap: 5px;
  font-size: 15px;
  color: ${(p) => (p.$active ? "#eef6f9" : "#222")};
  background: ${(p) => (p.$active ? TEAL : "#fff")};
`;
const DocName = styled.span`
  margin-left: ${(p) => p.$ml || 0}px;
`;
const Viewport = styled.div`
  flex: 1;
  min-height: 0;
  background: #222428;
`;
const RightBar = styled.div`
  flex: 1;
  display: flex;
  flex-direction: column;
  align-items: center;
  padding-left: 1px;
`;

/* floating context menu */
const ContextMenu = styled.div`
  position: absolute;
  left: 696px;
  top: 119px;
  width: 158px;
  padding: 3px 0;
  background: #fff;
  border: 1px solid #a8a8a8;
  border-top-color: #b4b4b4;
  box-shadow: 3px 3px 5px rgba(0, 0, 0, 0.45);
  z-index: 5;
`;
const MenuRow = styled.div`
  position: relative;
  height: 24px;
  display: flex;
  align-items: center;
  font-size: 14px;
  color: #222;
  white-space: nowrap;
`;
const MenuText = styled.span`
  padding-bottom: 4px;
`;
const CheckCell = styled.span`
  width: 32px;
  padding-left: 9px;
  flex-shrink: 0;
  display: flex;
  align-items: center;
`;
const MenuSep = styled.div`
  margin: 3px 12px 5px 12px;
  border-top: 1px solid #d8d8d8;
`;
const Callout = styled.div`
  position: absolute;
  left: -1px;
  top: -5px;
  width: 90px;
  height: 33px;
  border: 2px solid #c00000;
  box-shadow: inset 3px 3px 6px rgba(0, 0, 0, 0.35);
  pointer-events: none;
`;

const QUICK_ROWS = ["快速存取工具列", "上框線列", "下框線列", "左框線列", "右框線列"];
const TAB_ROWS = [
  ["首頁", true],
  ["曲線", true],
  ["分析", true],
  ["視圖", true],
  ["渲染", true],
  ["工具", true],
  ["應用模組", true],
  ["可視報告", false],
  ["開發人員", false],
  ["組立件", true],
];

const TREE_OPS = [
  ["CAVITY_MILL", "bulb", "cavity", "g"],
  ["PLANAR_MILL", "bulb", "planar", "g"],
  ["FLOOR_WAL...", "check", "floorOp", "g"],
  ["FLOOR_WALL", "check", "floorOp", "g"],
  ["FLOOR_WAL...", "bulb", "floorOp", "p"],
  ["FLOOR_WAL...", "bulb", "floorOp", "p"],
  ["FLOOR_WAL...", "bulb", "floorOp", "p"],
  ["FLOOR_WAL...", "bulb", "floorOp", "p"],
  ["FLOOR_WAL...", "bulb", "floorOp", "p"],
  ["VARIABLE_C...", "bulb", "contour", "g"],
  ["CONTOUR_P...", "check", "contour", "g"],
];

const RIBBON_ITEMS = [
  ["工序", "ops", 43],
  ["顯示", "display", 43],
  ["工件", "workpiece", 43],
  ["分析", "analysis", 43],
  ["幾何體", "cross", 53],
  ["同步建模", "sync", 68],
  ["特徵", "feature", 42],
  ["工具", "tools", 44],
];

const RAIL = [
  ["gear", 6, 16],
  ["railGeom", 28, 26],
  ["railMachine", 18, 23],
  ["railProgram", 18, 25],
  ["railOrder", 6, 46, true],
  ["railReuse", 8, 24],
  ["railTools", 18, 23],
  ["railBooks", 20, 22],
  ["railInfo", 30, 24],
  ["railWeb", 31, 22],
  ["railClock", 31, 23],
  ["railColor", 20, 21],
];

const RIGHT = [
  ["rightA", 11],
  ["rightB", 9],
  ["rightC", 9],
  ["rightD", 11],
  ["rightE", 8],
  ["rightF", 18],
  ["rightG", 7],
  ["rightH", 21],
  ["rightI", 10],
  ["rightJ", 10],
  ["rightK", 10],
];

const render = (name, props) => {
  const Cmp = Icons[name];
  return <Cmp {...props} />;
};

const MenuCheck = () => (
  <Ic w={9} h={8}>
    <path d="M1 4l2.5 2.5L8 1" fill="none" stroke="#222" strokeWidth="1.8" />
  </Ic>
);

const PartDrawing = () => (
  <Glyph $clip width="620" height="504" viewBox="294 253 620 504">
    <defs>
      <linearGradient id="cyl" x1="0" y1="0" x2="1" y2="0">
        <stop offset="0" stopColor="#a3a8b2" />
        <stop offset=".17" stopColor="#acb1bb" />
        <stop offset=".26" stopColor="#c3c8d4" />
        <stop offset=".5" stopColor="#d0d7e7" />
        <stop offset=".68" stopColor="#d6deee" />
        <stop offset=".8" stopColor="#c8cfdd" />
        <stop offset="1" stopColor="#b5bbc7" />
      </linearGradient>
      <linearGradient id="prismL" x1="0" y1="0" x2="1" y2="0">
        <stop offset="0" stopColor="#b8bcc8" />
        <stop offset="1" stopColor="#bcc3d0" />
      </linearGradient>
      <linearGradient id="domeL" x1="0" y1="1" x2="1" y2="0">
        <stop offset="0" stopColor="#8b909c" />
        <stop offset=".45" stopColor="#babec9" />
        <stop offset="1" stopColor="#f6f7fc" />
      </linearGradient>
      <linearGradient id="domeC" x1="0" y1="0" x2="0" y2="1">
        <stop offset="0" stopColor="#fbfbfe" />
        <stop offset=".6" stopColor="#ffffff" />
        <stop offset=".85" stopColor="#e6e9f2" />
        <stop offset="1" stopColor="#c8cdd9" />
      </linearGradient>
      <linearGradient id="domeR" x1="0" y1="0" x2="0" y2="1">
        <stop offset="0" stopColor="#c6cbd8" />
        <stop offset=".2" stopColor="#f6f7fb" />
        <stop offset=".65" stopColor="#ffffff" />
        <stop offset="1" stopColor="#cdd2de" />
      </linearGradient>
      <linearGradient id="flange" x1="0" y1="0" x2="0" y2="1">
        <stop offset="0" stopColor="#e6e9f2" />
        <stop offset="1" stopColor="#fbfcff" />
      </linearGradient>
    </defs>

    {/* cylinder */}
    <path d="M307 545 L325 538 L336 550 L622 552 L622 540 Q636 542 642 545 Q642 556 475 556 Q307 556 307 545z" fill="#eef3ff" />
    <path d="M306.5 545 Q390 556 475 556 Q560 556 642.5 545 L642.5 701 Q600 713 475 713 Q350 713 306.5 700z" fill="url(#cyl)" />
    <path d="M336 551 Q400 556 475 556 Q560 556 622 552" fill="none" stroke="#55585f" strokeWidth=".5" strokeDasharray="12 5" />

    {/* prism */}
    <path d="M328 483 L337 494 L337 551 L327 538z" fill="#a1a5af" />
    <path d="M337 494 L484 500 L484 556 L337 551z" fill="url(#prismL)" />
    <path d="M484 500 L622 494 L622 552 L484 556z" fill="#ced4e2" />
    <path d="M337 494V551M484 500V556" stroke="#2e3036" strokeWidth=".9" fill="none" />

    {/* flange */}
    <path d="M328 483 L345 481 L598 481 L612 482 L622 494 L484 501 L337 494z" fill="url(#flange)" />
    <path d="M328 483 L337 494 L484 500 L622 494" fill="none" stroke="#2e3036" strokeWidth=".7" />

    {/* dome faces */}
    <path d="M395 377 L433 382 C408 396 378 425 366 462 L358 478 L362 482 L345 482 C352 475 352 470 352 465 C353 440 368 405 395 377z" fill="url(#domeL)" />
    <path d="M443 382 L517 382 C498 420 484 455 480 487 L362 481 C364 460 392 410 443 382z" fill="url(#domeC)" />
    <path d="M523 382 L557 378 C578 410 596 445 598 482 L487 487 C488 455 505 420 523 382z" fill="url(#domeR)" />
    <path d="M433 382 L443 382 C392 410 364 460 362 481 L358 480 C361 455 390 405 433 382z" fill="#f2f4fa" />
    <path d="M517 382 L523 382 C505 420 488 455 487 487 L480 487 C484 455 498 420 517 382z" fill="#e8ebf3" />

    {/* top face */}
    <path d="M395 377 Q440 371 478 372 Q525 372 557 378 L525 382 L433 382z" fill="#e3e8f5" />

    {/* edges */}
    <g fill="none" stroke="#2a2c32" strokeWidth=".7">
      <path d="M395 377 L433 382 H525 L557 378" />
      <path d="M433 382 C405 396 376 425 366 462 Q363 476 352 490" />
      <path d="M443 382 C392 410 364 460 362 481 Q361 490 358 494" />
      <path d="M517 382 C498 420 484 455 480 487 Q480 496 476 500" />
      <path d="M523 382 C505 420 488 455 487 487 Q487 496 493 500" />
      <path d="M362 481 L480 487 H487 L598 482" />
      <path d="M557 378 C578 410 596 445 598 482 Q600 492 622 494" />
      <path d="M395 377 C368 405 353 440 352 465 Q352 482 328 483" strokeWidth=".5" />
      <path d="M602 481 L612 495" strokeWidth=".5" />
    </g>

    {/* datum csys */}
    <path d="M475 283 V366" stroke="#0c3fe0" strokeWidth="2" />
    <path d="M475 260 L479 283 H471z" fill="#0c3fe0" />
    <path d="M475 366 L430 360" stroke="#1f8a2a" strokeWidth="2" />
    <path d="M419 359 L434 355 L432 364z" fill="#1f8a2a" />
    <path d="M475 366 L550 362" stroke="#c82a2a" strokeWidth="2" />
    <path d="M564 362 L547 358 L548 366z" fill="#d03030" />
    <g fontFamily="Liberation Sans, sans-serif" fontSize="14.5">
      <text x="453.5" y="261" fill="#0c3fe0">ZM</text>
      <text x="418" y="357" fill="#1f8a2a">YM</text>
      <text x="546.5" y="358" fill="#c82a2a">XM</text>
    </g>

    {/* absolute csys, mostly cut off by the window */}
    <text x="340" y="751" fontFamily="Liberation Sans, sans-serif" fontSize="11" fill="#0c3fe0">Z</text>
    <path d="M344 752 V757" stroke="#0c3fe0" strokeWidth="1.5" />
  </Glyph>
);

export default function App() {
  return (
    <Root>
      <GlobalStyle />

      <TitleBar>
        <Logo>NX</Logo>
        <QuickCell $w={32} $pad={10}>{render("save")}</QuickCell>
        <QuickCell $w={44} $pad={7} $gap={7}>
          {render("undo")}
          <Caret />
        </QuickCell>
        <QuickCell $w={75} $pad={8} $gap={9}>
          {render("scissors")}
          {render("copy")}
          {render("paste")}
        </QuickCell>
        <QuickCell $w={44} $pad={7} $gap={6}>
          {render("view")}
          <Caret />
        </QuickCell>
        <QuickCell $w={29} $pad={6}>{render("brush")}</QuickCell>
        <QuickCell $w={230} $pad={6}>
          {render("switchWin")}
          <QuickText $ml={3}>切換視窗</QuickText>
          <QuickText $ml={9}>邊界管理器</QuickText>
          <QuickGap $w={8} />
          {render("winBlue")}
          <QuickText $ml={7}>視窗</QuickText>
          <QuickGap $w={2} />
          <Caret $s={4} />
          <MenuGrip />
        </QuickCell>
        <AppTitle>NX 12 - 加工</AppTitle>
        <WinControls>
          <Ic w={9} h={9}>
            <path d="M0 8h8" stroke="#444" strokeWidth="2" />
          </Ic>
          <Ic w={13} h={11}>
            <rect x=".5" y=".5" width="12" height="10" fill="none" stroke="#444" />
            <path d="M0 1h13" stroke="#444" strokeWidth="1.5" />
          </Ic>
          <Ic w={12}>
            <path d="M1 1l10 10M11 1L1 11" stroke="#444" strokeWidth="1.8" />
          </Ic>
        </WinControls>
      </TitleBar>

      <TabBar>
        <FileTab>檔案(F)</FileTab>
        <RibbonTab $w={59} $ml={1} $active>首頁</RibbonTab>
        <RibbonTab $w={58}>曲線</RibbonTab>
        <RibbonTab $w={58}>分析</RibbonTab>
        <RibbonTab $w={58}>視圖</RibbonTab>
        <RibbonTab $w={58}>渲染</RibbonTab>
        <RibbonTab $w={58}>工具</RibbonTab>
        <RibbonTab $w={88}>應用模組</RibbonTab>
        <RibbonTab $w={78}>組立件</RibbonTab>
        <SearchBox>
          搜尋指令
          {render("search")}
        </SearchBox>
        <TabRight>
          {render("ribbonMin")}
          {render("chevUp")}
          {render("help")}
          <HatLabel>
            {render("hat")}
            教學
          </HatLabel>
        </TabRight>
      </TabBar>

      <Ribbon>
        <Group $w={248}>
          <GroupBody $pad={6}>
            <RibbonItem $w={69}>
              <ItemIcon>{render("toolCreate")}</ItemIcon>
              <ItemLabel>建立刀具</ItemLabel>
            </RibbonItem>
            <RibbonItem $w={75}>
              <ItemIcon>{render("geomCreate")}</ItemIcon>
              <ItemLabel>建立幾何體</ItemLabel>
            </RibbonItem>
            <RibbonItem $w={68}>
              <ItemIcon>{render("opCreate")}</ItemIcon>
              <ItemLabel>建立工序</ItemLabel>
            </RibbonItem>
            <SmallStack>
              {render("smallA")}
              {render("smallB")}
            </SmallStack>
          </GroupBody>
          <GroupFoot $pad={100}>
            <FootLabel>刀片</FootLabel>
            <Caret $s={4} />
          </GroupFoot>
        </Group>
        <Group $w={55}>
          <GroupBody>
            <RibbonItem $w={55}>
              <ItemIcon>{render("props")}</ItemIcon>
              <ItemLabel>屬性</ItemLabel>
              <ItemCaret><Caret $s={4} /></ItemCaret>
            </RibbonItem>
          </GroupBody>
          <GroupFoot $pad={4}>
            <FootLabel>動作</FootLabel>
            <Caret $s={4} />
          </GroupFoot>
        </Group>
        {RIBBON_ITEMS.map(([label, icon, w]) => (
          <Group key={label + icon} $w={w}>
            <GroupBody>
              <RibbonItem $w={w}>
                <ItemIcon>{render(icon)}</ItemIcon>
                <ItemLabel>{label}</ItemLabel>
                <ItemCaret><Caret $s={4} /></ItemCaret>
              </RibbonItem>
            </GroupBody>
          </Group>
        ))}
        <RibbonMore><Caret $s={4} /></RibbonMore>
      </Ribbon>

      <SelBar>
        <SelSection $w={110} $pad={9}>
          {render("menuFn")}
          <MenuLabel>
            功能表(<u>M</u>)
          </MenuLabel>
          <Caret $s={4} />
        </SelSection>
        <SelSection $w={64} $pad={10}>
          <IconGrid $tpl="24px 24px">
            <ToolBtn>{render("orderA")}</ToolBtn>
            <ToolBtn $on>{render("orderB")}</ToolBtn>
            <ToolBtn>{render("orderC")}</ToolBtn>
            <ToolBtn>{render("orderD")}</ToolBtn>
          </IconGrid>
        </SelSection>
        <SelSection $w={39} $pad={10}>
          <IconGrid $tpl="24px">
            <ToolBtn $on>{render("orderE")}</ToolBtn>
            <ToolBtn>{render("orderF")}</ToolBtn>
          </IconGrid>
        </SelSection>
        <SelSection $w={214} $pad={13} $gap={9} $plain>
          {render("drum")}
          <ComboStack>
            <Combo $w={68}>
              全部
              <Caret />
            </Combo>
            <Combo $w={167}>
              無選取篩選器
              <Caret />
            </Combo>
          </ComboStack>
        </SelSection>
        <SelSection $w={183} $plain>
          <ComboStack>
            <Combo $w={175}>
              整個組立件
              <Caret />
            </Combo>
            <GrayNode>{render("grayNodes")}</GrayNode>
          </ComboStack>
        </SelSection>
        <SelSection $w={90} $pad={0} $plain>
          <IconGrid $tpl="35px 24px 24px">
            <ToolBtn>{render("grayFilter")}</ToolBtn>
            <ToolBtn $on>{render("box3d")}</ToolBtn>
            <ToolBtn>{render("grayCloud")}</ToolBtn>
            <ToolBtn>
              {render("snapFilter")}
              <Caret $s={4} />
            </ToolBtn>
            <ToolBtn>{render("grayUndo")}</ToolBtn>
            <ToolBtn>{render("hexDot")}</ToolBtn>
          </IconGrid>
        </SelSection>
        <RibbonMore><Caret $s={4} /></RibbonMore>
      </SelBar>

      <Main>
        <Rail>
          {RAIL.map(([icon, top, h, active]) => {
            const Slot = active ? RailActive : RailSlot;
            return (
              <Slot key={icon} $top={top} $h={h}>
                {render(icon)}
              </Slot>
            );
          })}
        </Rail>

        <Navigator>
          <NavHead>
            工序導覽器 - 幾何體
            {render("navMax")}
          </NavHead>
          <TreeTable>
            <TreeHeader>
              名稱
              <HeaderGrip />
            </TreeHeader>
            <TreeBody>
              <TreeRow>
                <TreeCell $indent={4}>GEOMETRY</TreeCell>
                <TailCell />
              </TreeRow>
              <TreeRow $odd>
                <TreeCell $indent={10}>
                  <Stem $last />
                  {render("folder")}
                  <RowLabel $ml={4}>未用項</RowLabel>
                </TreeCell>
                <TailCell />
              </TreeRow>
              <TreeRow>
                <TreeCell $indent={6}>
                  <Expander $mr={6} />
                  {render("workBox")}
                  <RowLabel $ml={3}>WORKPIECE</RowLabel>
                </TreeCell>
                <TailCell />
              </TreeRow>
              <TreeRow $odd>
                <TreeCell $indent={26}>
                  <Expander $mr={4} />
                  {render("mcs")}
                  <RowLabel $ml={2}>MCS</RowLabel>
                </TreeCell>
                <TailCell />
              </TreeRow>
              {TREE_OPS.map(([name, status, icon, tail], i) => (
                <TreeRow key={i} $odd={i % 2 === 1}>
                  <TreeCell $indent={48}>
                    <Stem $last={i === TREE_OPS.length - 1} />
                    <StatusCell>{render(status)}</StatusCell>
                    {render(icon)}
                    <RowLabel $ml={3}>{name}</RowLabel>
                  </TreeCell>
                  <TailCell>
                    <TailMark $c={tail} />
                  </TailCell>
                </TreeRow>
              ))}
              {Array.from({ length: 6 }).map((_, i) => (
                <TreeRow key={i} $odd={i % 2 === 1}>
                  <TreeCell $indent={0} />
                  <TailCell />
                </TreeRow>
              ))}
              <TreeEnd />
            </TreeBody>
            <TreeScroll>
              <ScrollThumb />
            </TreeScroll>
          </TreeTable>
        </Navigator>

        <SideBar>
          <SideSlot $top={12}>{render("sideA")}</SideSlot>
          <SideSlot $top={10}>{render("sideB")}</SideSlot>
          <SideSlot $top={10}>{render("sideC")}</SideSlot>
          <SideSlot $top={13}>{render("sideD")}</SideSlot>
          <SideSlot $top={11}><Caret $s={4} /></SideSlot>
          <SideSlot $top={14}>{render("sideE")}</SideSlot>
          <SideSlot $top={11}><Caret $s={4} /></SideSlot>
          <SideSlot $top={11}>{render("sideF")}</SideSlot>
          <SideRule $top={9} />
        </SideBar>

        <ViewColumn>
          <DocTabs>
            <DocTab $w={150} $pad={6} $active>
              {render("tabOp")}
              <DocName $ml={-2}>5X_A_par.prt</DocName>
              <DocName $ml={1}>{render("docRef", { light: true })}</DocName>
              {render("closeX")}
            </DocTab>
            <DocTab $w={120} $pad={8}>
              {render("tabOp")}
              123.prt
              {render("docRef")}
            </DocTab>
          </DocTabs>
          <Viewport>
            <PartDrawing />
          </Viewport>
        </ViewColumn>

        <RightBar>
          {RIGHT.map(([icon, top]) => (
            <SideSlot key={icon} $top={top}>{render(icon)}</SideSlot>
          ))}
          <SideRule $top={8} />
        </RightBar>
      </Main>

      <ContextMenu>
        <MenuRow>
          <CheckCell />
          <MenuText>取消停靠功能區</MenuText>
        </MenuRow>
        <MenuSep />
        {QUICK_ROWS.map((t) => (
          <MenuRow key={t}>
            <CheckCell><MenuCheck /></CheckCell>
            <MenuText>{t}</MenuText>
          </MenuRow>
        ))}
        <MenuSep />
        <MenuRow>
          <CheckCell><MenuCheck /></CheckCell>
          <MenuText>提示列/狀態列</MenuText>
        </MenuRow>
        <MenuSep />
        {TAB_ROWS.map(([t, on]) => (
          <MenuRow key={t}>
            <CheckCell>{on && <MenuCheck />}</CheckCell>
            <MenuText>{t}</MenuText>
          </MenuRow>
        ))}
        <MenuSep />
        <MenuRow>
          <CheckCell />
          <MenuText>自訂...</MenuText>
          <Callout />
        </MenuRow>
      </ContextMenu>
    </Root>
  );
}
